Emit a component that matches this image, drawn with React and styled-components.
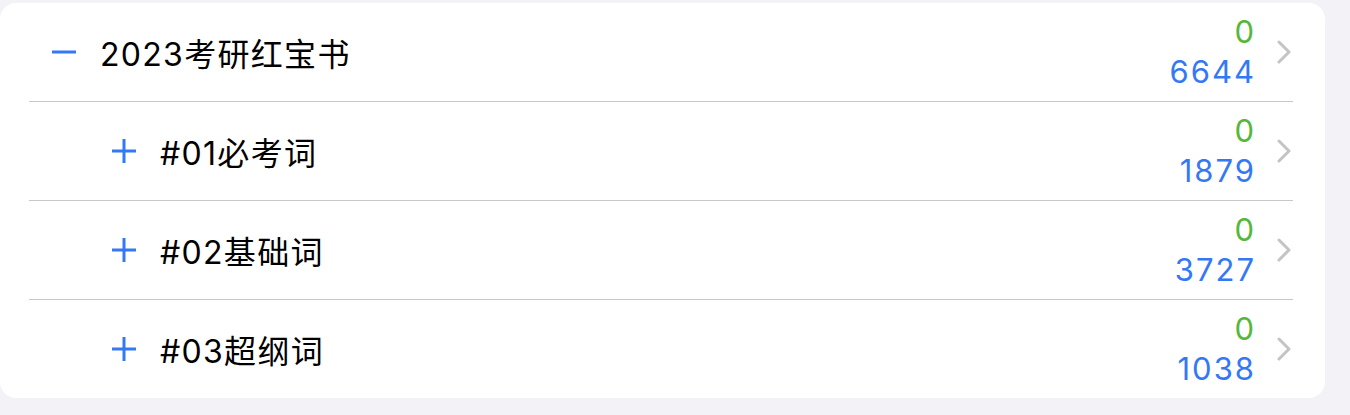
import React from "react";
import styled, { createGlobalStyle } from "styled-components";

const GlobalStyle = createGlobalStyle`
    html, body {
        margin: 0;
        padding: 0;
        background: #f2f2f7;
    }
    body {
        font-family: Inter, "Noto Sans CJK SC", sans-serif;
        -webkit-font-smoothing: antialiased;
    }
`;

const Page = styled.div`
    padding-top: 3px;
    width: 1350px;
    height: 412px;
`;

const Card = styled.div`
    width: 1325px;
    background: #ffffff;
    border-radius: 16px;
    overflow: hidden;
`;

const Row = styled.div`
    position: relative;
    height: 98px;
    display: flex;
    align-items: center;
    padding-left: ${(p) => (p.$level ? 112 : 52)}px;
    padding-right: 34px;
    box-sizing: border-box;
    margin-top: ${(p) => (p.$divider ? 1 : 0)}px;
    &::before {
        content: "";
        display: ${(p) => (p.$divider ? "block" : "none")};
        position: absolute;
        top: -1px;
        left: 29px;
        right: 32px;
        height: 1px;
        background: #c8c8cc;
    }
`;

const Toggle = styled.svg`
    width: 24px;
    height: 24px;
    flex: none;
    margin-right: 24px;
`;

const Title = styled.div`
    flex: 1;
    font-size: 32px;
    color: #000000;
    letter-spacing: 1.3px;
`;

const Counts = styled.div`
    display: flex;
    flex-direction: column;
    align-items: flex-end;
    font-size: 31px;
    line-height: 40px;
    letter-spacing: 2px;
    margin-right: 21px;
`;

const Count = styled.span`
    color: ${(p) => p.$color};
`;

const Chevron = styled.svg`
    width: 14px;
    height: 24px;
    flex: none;
`;

const BLUE = "#3478f6";
const GREEN = "#55b83a";

const rows = [
    { title: "2023考研红宝书", level: 0, open: true, done: 0, total: 6644 },
    { title: "#01必考词", level: 1, open: false, done: 0, total: 1879 },
    { title: "#02基础词", level: 1, open: false, done: 0, total: 3727 },
    { title: "#03超纲词", level: 1, open: false, done: 0, total: 1038 },
];

const ToggleIcon = ({ open }) => (
    <Toggle viewBox="0 0 24 24">
        <line x1="0" y1="12" x2="24" y2="12" stroke={BLUE} strokeWidth="3" />
        {!open && (
            <line x1="12" y1="0" x2="12" y2="24" stroke={BLUE} strokeWidth="3" />
        )}
    </Toggle>
);

const App = () => {
    return (
        <>
            <GlobalStyle />
            <Page>
                <Card>
                    {rows.map((r, i) => (
                        <Row key={r.title} $level={r.level} $divider={i > 0}>
                            <ToggleIcon open={r.open} />
                            <Title>{r.title}</Title>
                            <Counts>
                                <Count $color={GREEN}>{r.done}</Count>
                                <Count $color={BLUE}>{r.total}</Count>
                            </Counts>
                            <Chevron viewBox="0 0 14 24">
                                <polyline
                                    points="2,2 12,12 2,22"
                                    fill="none"
                                    stroke="#c4c4c7"
                                    strokeWidth="3"
                                    strokeLinecap="round"
                                    strokeLinejoin="round"
                                />
                            </Chevron>
                        </Row>
                    ))}
                </Card>
            </Page>
        </>
    );
};

export default App;
